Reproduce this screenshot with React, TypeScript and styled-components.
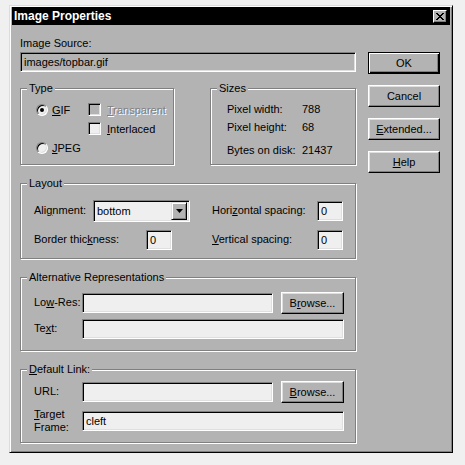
import styled, { createGlobalStyle } from "styled-components";

const GREY = "#b3b3b3";
const FIELD = "#efefef";

const GlobalStyle = createGlobalStyle`
	html, body {
		margin: 0;
		padding: 0;
		background: #f0f0f0;
	}
	body {
		font-family: "Liberation Sans", Arial, sans-serif;
		font-size: 11px;
		color: #000;
	}
`;

const Page = styled.div`
	padding: 5px 0 0 9px;
`;

const Dialog = styled.div`
	width: 444px;
	height: 448px;
	box-sizing: border-box;
	background: ${GREY};
	border: 1px solid;
	border-color: #dcdcdc #000 #000 #dcdcdc;
	box-shadow: inset 1px 1px 0 #fff, inset -1px -1px 0 #808080;
	padding: 1px 2px 2px 2px;
	display: flex;
	flex-direction: column;
`;

const TitleBar = styled.div`
	height: 18px;
	background: #000;
	color: #fff;
	font-size: 12px;
	font-weight: bold;
	display: flex;
	align-items: center;
	justify-content: space-between;
	padding: 0 3px 0 2px;
`;

const CloseButton = styled.div`
	width: 14px;
	height: 13px;
	box-sizing: border-box;
	background: ${GREY};
	border: 1px solid;
	border-color: #fff #000 #000 #fff;
	box-shadow: inset -1px -1px 0 #808080;
	display: flex;
	align-items: center;
	justify-content: center;
`;

const Body = styled.div`
	display: flex;
	gap: 12px;
	padding-left: 8px;
`;

const LeftColumn = styled.div`
	width: 336px;
	display: flex;
	flex-direction: column;
`;

const RightColumn = styled.div`
	width: 72px;
	margin-top: 27px;
	display: flex;
	flex-direction: column;
	gap: 11px;
`;

const SourceLabel = styled.div`
	margin-top: 11px;
	line-height: 14px;
`;

const Field = styled.div<{ $w?: number; $h?: number; $bg?: string }>`
	width: ${(p) => (p.$w ? `${p.$w}px` : "auto")};
	height: ${(p) => p.$h ?? 20}px;
	box-sizing: border-box;
	background: ${(p) => p.$bg ?? FIELD};
	border: 1px solid;
	border-color: #808080 #fff #fff #808080;
	box-shadow: inset 1px 1px 0 #000, inset -1px -1px 0 #dfdfdf;
	padding-left: 3px;
	display: flex;
	align-items: center;
	flex-shrink: 0;
`;

const SourceField = styled(Field)`
	margin-top: 2px;
`;

const Button = styled.div<{ $w?: number; $default?: boolean }>`
	width: ${(p) => p.$w ?? 72}px;
	height: 22px;
	box-sizing: border-box;
	background: ${GREY};
	border: 1px solid;
	border-color: ${(p) => (p.$default ? "#000" : "#fff #000 #000 #fff")};
	box-shadow: ${(p) =>
		p.$default
			? "inset 1px 1px 0 #fff, inset -1px -1px 0 #000, inset -2px -2px 0 #808080"
			: "inset -1px -1px 0 #808080, inset 1px 1px 0 #dfdfdf"};
	display: flex;
	align-items: center;
	justify-content: center;
	flex-shrink: 0;
	line-height: 14px;
	white-space: nowrap;
`;

const Mn = styled.span`
	text-decoration: underline;
	text-underline-offset: 1px;
`;

const Group = styled.div<{ $w?: number; $h: number; $top: number }>`
	position: relative;
	width: ${(p) => (p.$w ? `${p.$w}px` : "auto")};
	height: ${(p) => p.$h}px;
	margin-top: ${(p) => p.$top}px;
	box-sizing: border-box;
	border: 1px solid #808080;
	box-shadow: inset 1px 1px 0 #fff, 1px 1px 0 #fff;
`;

const Legend = styled.span`
	position: absolute;
	top: -8px;
	left: 6px;
	padding: 0 2px;
	background: ${GREY};
	line-height: 14px;
	white-space: nowrap;
`;

const TopRow = styled.div`
	display: flex;
	justify-content: space-between;
	margin-top: 16px;
`;

const TypeGrid = styled.div`
	display: grid;
	grid-template-columns: 52px auto;
	grid-template-rows: 19px 19px 20px;
	align-items: center;
	padding: 11px 0 0 15px;
`;

const Option = styled.label<{ $gap: number; $disabled?: boolean }>`
	display: flex;
	align-items: center;
	gap: ${(p) => p.$gap}px;
	line-height: 14px;
	color: ${(p) => (p.$disabled ? "#808080" : "#000")};
	text-shadow: ${(p) => (p.$disabled ? "1px 1px 0 #fff" : "none")};
`;

const Radio = styled.span<{ $checked?: boolean }>`
	width: 12px;
	height: 12px;
	box-sizing: border-box;
	border-radius: 50%;
	background: ${FIELD};
	border: 1px solid;
	border-color: #808080 #fff #fff #808080;
	box-shadow: inset 1px 1px 0 #000, inset -1px -1px 0 #dfdfdf;
	display: flex;
	align-items: center;
	justify-content: center;
	&::after {
		content: "";
		width: 4px;
		height: 4px;
		border-radius: 50%;
		background: ${(p) => (p.$checked ? "#000" : "transparent")};
	}
`;

const Check = styled.span<{ $disabled?: boolean }>`
	width: 13px;
	height: 13px;
	box-sizing: border-box;
	background: ${(p) => (p.$disabled ? GREY : FIELD)};
	border: 1px solid;
	border-color: #808080 #fff #fff #808080;
	box-shadow: inset 1px 1px 0 #000, inset -1px -1px 0 #dfdfdf;
`;

const SizesGrid = styled.div`
	display: grid;
	grid-template-columns: 75px auto;
	grid-template-rows: 17px 19px 27px;
	align-items: center;
	padding: 11px 0 0 16px;
`;

const FormRows = styled.div<{ $top: number; $gap: number }>`
	display: flex;
	flex-direction: column;
	gap: ${(p) => p.$gap}px;
	padding: ${(p) => p.$top}px 0 0 13px;
`;

const Row = styled.div`
	display: flex;
	align-items: center;
	height: 23px;
`;

const Cell = styled.div<{ $w?: number }>`
	display: flex;
	align-items: center;
	width: ${(p) => (p.$w ? `${p.$w}px` : "auto")};
`;

const Label = styled.span<{ $w: number }>`
	width: ${(p) => p.$w}px;
	flex-shrink: 0;
	line-height: 13px;
	white-space: nowrap;
`;

const Select = styled(Field)`
	justify-content: space-between;
	padding-right: 2px;
`;

const ArrowButton = styled.div`
	width: 16px;
	height: 18px;
	box-sizing: border-box;
	background: ${GREY};
	border: 1px solid;
	border-color: #dfdfdf #000 #000 #dfdfdf;
	box-shadow: inset 1px 1px 0 #fff, inset -1px -1px 0 #808080;
	display: flex;
	align-items: center;
	justify-content: center;
`;

const Gap = styled.div<{ $w: number }>`
	width: ${(p) => p.$w}px;
	flex-shrink: 0;
`;

const closeRows = [
	[0, 2, 6, 8],
	[1, 3, 5, 7],
	[2, 6],
	[3, 5],
	[2, 6],
	[1, 3, 5, 7],
	[0, 2, 6, 8],
];

function CloseGlyph() {
	return (
		<svg width="8" height="7" viewBox="0 0 8 7" shapeRendering="crispEdges">
			{closeRows.map((r, y) =>
				r.length === 4 ? (
					<g key={y}>
						<rect x={r[0]} y={y} width={r[1] - r[0]} height={1} fill="#000" />
						<rect x={r[2]} y={y} width={r[3] - r[2]} height={1} fill="#000" />
					</g>
				) : (
					<rect key={y} x={r[0]} y={y} width={r[1] - r[0]} height={1} fill="#000" />
				)
			)}
		</svg>
	);
}

export default function App() {
	return (
		<>
			<GlobalStyle />
			<Page>
				<Dialog>
					<TitleBar>
						<span>Image Properties</span>
						<CloseButton>
							<CloseGlyph />
						</CloseButton>
					</TitleBar>
					<Body>
						<LeftColumn>
							<SourceLabel>Image Source:</SourceLabel>
							<SourceField $bg={GREY}>images/topbar.gif</SourceField>

							<TopRow>
								<Group $w={154} $h={77} $top={0}>
									<Legend>Type</Legend>
									<TypeGrid>
										<Option $gap={4}>
											<Radio $checked />
											<span>
												<Mn>G</Mn>IF
											</span>
										</Option>
										<Option $gap={6} $disabled>
											<Check $disabled />
											<span>
												<Mn>T</Mn>ransparent
											</span>
										</Option>
										<span />
										<Option $gap={6}>
											<Check />
											<span>
												<Mn>I</Mn>nterlaced
											</span>
										</Option>
										<Option $gap={4}>
											<Radio />
											<span>
												<Mn>J</Mn>PEG
											</span>
										</Option>
									</TypeGrid>
								</Group>

								<Group $w={146} $h={77} $top={0}>
									<Legend>Sizes</Legend>
									<SizesGrid>
										<span>Pixel width:</span>
										<span>788</span>
										<span>Pixel height:</span>
										<span>68</span>
										<span>Bytes on disk:</span>
										<span>21437</span>
									</SizesGrid>
								</Group>
							</TopRow>

							<Group $h={76} $top={18}>
								<Legend>Layout</Legend>
								<FormRows $top={15} $gap={6}>
									<Row>
										<Cell $w={178}>
											<Label $w={59}>
												Ali<Mn>g</Mn>nment:
											</Label>
											<Select $w={97} $h={22}>
												<span>bottom</span>
												<ArrowButton>
													<svg width="7" height="4" viewBox="0 0 7 4">
														<path d="M0 0h7L3.5 4z" fill="#000" />
													</svg>
												</ArrowButton>
											</Select>
										</Cell>
										<Cell>
											<Label $w={105}>
												Hori<Mn>z</Mn>ontal spacing:
											</Label>
											<Field $w={26}>0</Field>
										</Cell>
									</Row>
									<Row>
										<Cell $w={178}>
											<Label $w={112}>
												Border thic<Mn>k</Mn>ness:
											</Label>
											<Field $w={26}>0</Field>
										</Cell>
										<Cell>
											<Label $w={105}>
												<Mn>V</Mn>ertical spacing:
											</Label>
											<Field $w={26}>0</Field>
										</Cell>
									</Row>
								</FormRows>
							</Group>

							<Group $h={74} $top={18}>
								<Legend>Alternative Representations</Legend>
								<FormRows $top={13} $gap={3}>
									<Row>
										<Label $w={48}>
											Lo<Mn>w</Mn>-Res:
										</Label>
										<Field $w={191} />
										<Gap $w={8} />
										<Button $w={63}>
											B<Mn>r</Mn>owse...
										</Button>
									</Row>
									<Row>
										<Label $w={48}>
											Te<Mn>x</Mn>t:
										</Label>
										<Field $w={262} />
									</Row>
								</FormRows>
							</Group>

							<Group $h={74} $top={18}>
								<Legend>
									<Mn>D</Mn>efault Link:
								</Legend>
								<FormRows $top={10} $gap={6}>
									<Row>
										<Label $w={48}>URL:</Label>
										<Field $w={191} />
										<Gap $w={8} />
										<Button $w={63}>
											<Mn>B</Mn>rowse...
										</Button>
									</Row>
									<Row>
										<Label $w={48}>
											<Mn>T</Mn>arget
											<br />
											Frame:
										</Label>
										<Field $w={262}>cleft</Field>
									</Row>
								</FormRows>
							</Group>
						</LeftColumn>

						<RightColumn>
							<Button $default>OK</Button>
							<Button>Cancel</Button>
							<Button>
								<Mn>E</Mn>xtended...
							</Button>
							<Button>
								<Mn>H</Mn>elp
							</Button>
						</RightColumn>
					</Body>
				</Dialog>
			</Page>
		</>
	);
}
